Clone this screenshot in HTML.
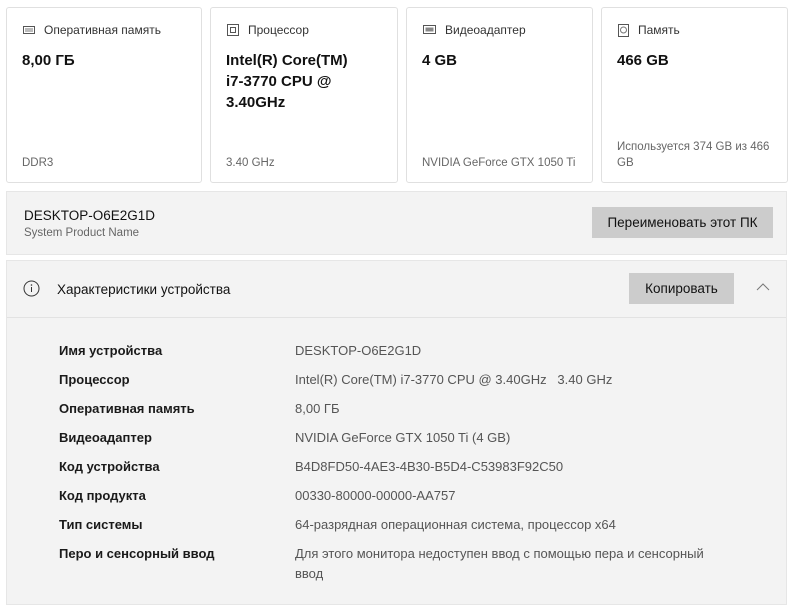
<!DOCTYPE html>
<html><head><meta charset="utf-8"><style>
*{box-sizing:border-box;margin:0;padding:0}
body{width:789px;height:606px;background:#fff;font-family:"Liberation Sans","Noto Sans CJK SC",sans-serif;color:#1a1a1a;position:relative;overflow:hidden}
.card{position:absolute;top:7px;height:176px;border:1px solid #e0e0e0;border-radius:3px;background:#fff}
.card .t{position:absolute;left:16px;top:15px;font-size:12px;color:#333;display:flex;align-items:center;gap:9px}
.card .v{position:absolute;left:15px;top:42px;font-size:15px;font-weight:bold;line-height:21px;color:#111}
.card .b{position:absolute;left:15px;bottom:11px;font-size:11.5px;color:#666;line-height:16px}
.p1{position:absolute;left:6px;top:191px;width:781px;height:64px;background:#f3f3f3;border:1px solid #e6e6e6}
.btn{position:absolute;background:#cccccc;font-size:13.5px;color:#111;display:flex;align-items:center;justify-content:center}
.p2{position:absolute;left:6px;top:260px;width:781px;height:345px;background:#f3f3f3;border:1px solid #e6e6e6}
.row{position:absolute;left:52px;font-size:13px;line-height:20px}
.row b{position:absolute;left:0;font-weight:bold;color:#1a1a1a;white-space:nowrap}
.row span{position:absolute;left:236px;width:440px;color:#555}
</style></head><body>
<div class="card" style="left:6px;width:196px">
 <div class="t"><svg width="12" height="8" viewBox="0 0 12 8"><rect x="0.5" y="0.5" width="11" height="7" fill="none" stroke="#555"/><path d="M2 3h8M2 5h8" stroke="#777"/></svg>Оперативная память</div>
 <div class="v">8,00 ГБ</div><div class="b">DDR3</div></div>
<div class="card" style="left:210px;width:188px">
 <div class="t"><svg width="12" height="12" viewBox="0 0 12 12"><rect x="0.5" y="0.5" width="11" height="11" fill="none" stroke="#555"/><rect x="3.5" y="3.5" width="5" height="5" fill="none" stroke="#555"/></svg>Процессор</div>
 <div class="v">Intel(R) Core(TM)<br>i7-3770 CPU @<br>3.40GHz</div><div class="b">3.40 GHz</div></div>
<div class="card" style="left:406px;width:187px">
 <div class="t"><svg width="13" height="10" viewBox="0 0 13 10"><rect x="0.5" y="0.5" width="12" height="8" fill="none" stroke="#555"/><rect x="2.5" y="2.5" width="8" height="4" fill="#888"/></svg>Видеоадаптер</div>
 <div class="v">4 GB</div><div class="b">NVIDIA GeForce GTX 1050 Ti</div></div>
<div class="card" style="left:601px;width:187px">
 <div class="t"><svg width="11" height="13" viewBox="0 0 11 13"><rect x="0.5" y="0.5" width="10" height="12" fill="none" stroke="#555"/><circle cx="5.5" cy="6" r="3" fill="none" stroke="#777"/></svg>Память</div>
 <div class="v">466 GB</div><div class="b">Используется 374 GB из 466<br>GB</div></div>

<div class="p1">
 <div style="position:absolute;left:17px;top:16px;font-size:13.5px;color:#111">DESKTOP-O6E2G1D</div>
 <div style="position:absolute;left:17px;top:35px;font-size:11.5px;color:#666">System Product Name</div>
 <div class="btn" style="left:585px;top:15px;width:181px;height:31px">Переименовать этот ПК</div>
</div>
<div class="p2">
 <div style="position:absolute;left:0;top:56px;width:779px;height:1px;background:#e2e2e2"></div>
 <svg style="position:absolute;left:16px;top:19px" width="17" height="17" viewBox="0 0 17 17"><circle cx="8.5" cy="8.5" r="7.5" fill="none" stroke="#333"/><path d="M8.5 7v5" stroke="#333"/><circle cx="8.5" cy="5" r="0.8" fill="#333"/></svg>
 <div style="position:absolute;left:50px;top:21px;font-size:13.5px;color:#111">Характеристики устройства</div>
 <div class="btn" style="left:622px;top:12px;width:105px;height:31px">Копировать</div>
 <svg style="position:absolute;left:749px;top:22px" width="14" height="8" viewBox="0 0 14 8"><path d="M1 7L7 1L13 7" fill="none" stroke="#777"/></svg>
 <div class="row" style="top:80px"><b>Имя устройства</b><span>DESKTOP-O6E2G1D</span></div>
 <div class="row" style="top:109px"><b>Процессор</b><span>Intel(R) Core(TM) i7-3770 CPU @ 3.40GHz&nbsp;&nbsp;&nbsp;3.40 GHz</span></div>
 <div class="row" style="top:138px"><b>Оперативная память</b><span>8,00 ГБ</span></div>
 <div class="row" style="top:167px"><b>Видеоадаптер</b><span>NVIDIA GeForce GTX 1050 Ti (4 GB)</span></div>
 <div class="row" style="top:196px"><b>Код устройства</b><span>B4D8FD50-4AE3-4B30-B5D4-C53983F92C50</span></div>
 <div class="row" style="top:225px"><b>Код продукта</b><span>00330-80000-00000-AA757</span></div>
 <div class="row" style="top:254px"><b>Тип системы</b><span>64-разрядная операционная система, процессор x64</span></div>
 <div class="row" style="top:283px"><b>Перо и сенсорный ввод</b><span>Для этого монитора недоступен ввод с помощью пера и сенсорный<br>ввод</span></div>
</div>
</body></html>
